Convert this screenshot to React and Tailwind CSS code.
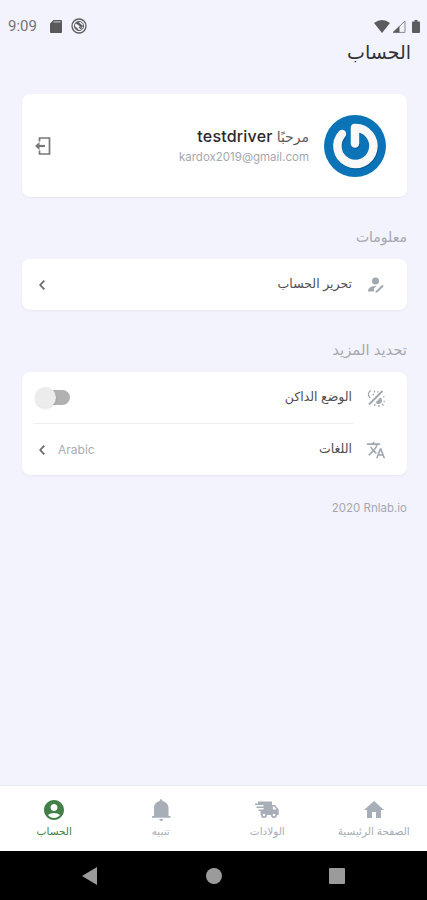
import React, { useState } from "react";
import { MdAccountCircle, MdHome, MdTranslate } from "react-icons/md";

function StatusBar() {
  return (
    <div dir="ltr" className="flex h-10 items-start justify-between pt-[16px] pr-[7px] pl-2 text-[#5c5c5e]">
      <div className="flex h-5 items-center">
        <span className="w-10 font-[Roboto] text-[15px] text-[#747478]">9:09</span>
        <svg viewBox="0 0 12 13" className="ml-[2px] h-[13px] w-3">
          <path d="M3.500 0H11a1 1 0 0 1 1 1v11a1 1 0 0 1-1 1H1a1 1 0 0 1-1-1V3.500z" fill="#59595b" />
          <path d="M3.500 1.900h7" stroke="#bfbfc4" strokeWidth="1.200" />
        </svg>
        <svg viewBox="0 0 16 16" className="ml-[9px] size-4" fill="none" stroke="currentColor">
          <circle cx="8" cy="8" r="7" strokeWidth="1.300" />
          <circle cx="8" cy="8" r="4.600" strokeWidth="1" />
          <path d="M4 5l3-1.500L12 8l-1.500 2L8 7.500z" fill="currentColor" stroke="none" />
          <path d="M4 9l3 3M8 9l2.500 2" strokeWidth="1.300" />
        </svg>
      </div>
      <div className="flex h-5 items-center">
        <svg viewBox="0 0 16 13" className="h-[13px] w-4" fill="currentColor">
          <path d="M0 3Q8-3 16 3L8 13z" />
        </svg>
        <svg viewBox="0 0 14 13" className="ml-[2px] h-[13px] w-[14px]">
          <path d="M1 12.400L13 1v11.400z" fill="none" stroke="#8a8a8d" />
          <path d="M1 12.500L7.500 6v6.500z" fill="currentColor" />
        </svg>
        <svg viewBox="0 0 8 13" className="ml-[6px] h-[13px] w-2" fill="currentColor">
          <path d="M2.500 0h3v1.500H7a1 1 0 0 1 1 1V12a1 1 0 0 1-1 1H1a1 1 0 0 1-1-1V2.500a1 1 0 0 1 1-1h1.500z" />
        </svg>
      </div>
    </div>
  );
}

function Avatar() {
  return (
    <svg viewBox="0 0 62 62" className="size-[62px] shrink-0">
      <circle cx="31" cy="31" r="31" fill="#0b74b8" />
      <g fill="none" strokeLinecap="round" strokeLinejoin="round" strokeWidth="8.500">
        <path d="M18 19A18 18 0 1 0 31 13v15.500" stroke="#075d96" transform="translate(.7 1.200)" />
        <path d="M18 19A18 18 0 1 0 31 13v15.500" stroke="#f8f8f8" />
      </g>
    </svg>
  );
}

function LogoutIcon() {
  return (
    <svg viewBox="0 0 16 18" className="h-[18px] w-4" fill="none" stroke="#777">
      <path d="M4.500 4.500V1h10v16h-10v-3.500" strokeWidth="1.700" />
      <path d="M3 9h7" strokeWidth="2.200" />
      <path d="M0 9l4.500-4v8z" fill="#777" stroke="none" />
    </svg>
  );
}

function UserEditIcon() {
  return (
    <svg viewBox="0 0 16 16" className="h-4 w-4" fill="#a1a8b0">
      <circle cx="7.500" cy="4" r="3.500" />
      <path d="M0 14.500c0-3.700 3-5.500 8.500-5.500L6 11.500v3z" />
      <path d="M7.500 14.500l6.800-6.800 1.500 1.500-6.600 6.300H7.500z" />
    </svg>
  );
}

function ThemeIcon() {
  return (
    <svg viewBox="0 0 18 18" className="size-[18px]" fill="none" stroke="#a1a8b0" strokeWidth="1.300">
      <path d="M2 15.500L15.500 2" strokeWidth="1.900" />
      <path d="M4 1.500C1 3 .5 6.500 3 9" />
      <path d="M8.500 13.500l5-5a3.600 3.600 0 1 1-5 5z" fill="#a1a8b0" stroke="none" />
      <path d="M7.500 1.500v2M5.500 5.500h1.500M10 2.800h1.500M16 8l1.500-.5M16.500 12.500h1.300M15 15l1.500 1.500M12 16v2M8 15l-.5 2" />
    </svg>
  );
}

function BellIcon() {
  return (
    <svg viewBox="0 0 24 24" className="size-6" fill="currentColor">
      <path d="M10.700 2.500a1.300 1.300 0 0 1 2.600 0v.6c3.900.9 6.200 3.700 6.200 7V18h2v1.700H3V18h2v-7.900c0-3.300 2-6.100 5.700-7z" />
      <path d="M10.300 20.900h4a2 2 0 0 1-4 0z" />
    </svg>
  );
}

function TruckIcon() {
  return (
    <svg viewBox="0 0 24 24" className="size-6" fill="currentColor">
      <path d="M3 3.500h14V7h3l3.700 4.500V17H5.500v-4h-2v-1.500h5V10h-7V8.500h7V7H0V5.500h3z" />
      <path d="M17.800 8.500V11.500h3.700l-2.300-3z" fill="#fff" />
      <circle cx="9" cy="17" r="3" />
      <circle cx="19" cy="17" r="3" />
      <circle cx="9" cy="17" r="1.300" fill="#fff" />
      <circle cx="19" cy="17" r="1.300" fill="#fff" />
    </svg>
  );
}

function Chevron() {
  return (
    <svg viewBox="0 0 6 10" className="ml-5 h-[10px] w-[6px]" fill="none" stroke="#686868" strokeWidth="1.700">
      <path d="M5.300.7L1.200 5l4.100 4.300" />
    </svg>
  );
}

function Row({ icon, label, children }) {
  return (
    <div className="flex h-[51px] items-center pr-[21px]">
      <span className="flex w-5 justify-center">{icon}</span>
      <span className="mr-[14px] text-[12.500px] text-[#505052]">{label}</span>
      <div className="mr-auto flex items-center" dir="ltr">{children}</div>
    </div>
  );
}

const tabs = [
  { label: "الصفحة الرئيسية", icon: MdHome },
  { label: "الولادات", icon: TruckIcon },
  { label: "تنبيه", icon: BellIcon },
  { label: "الحساب", icon: MdAccountCircle, active: true },
];

export default function App() {
  const [dark, setDark] = useState(false);

  return (
    <div dir="rtl" className="flex h-[900px] w-[427px] flex-col overflow-hidden bg-[#f2f3fc] font-[Inter,'DejaVu_Sans',sans-serif]">
      <StatusBar />
      <h1 className="h-[54px] pr-4 text-[19px] leading-[25px] text-[#333336]">الحساب</h1>

      <main className="flex-1 pr-5 pl-[22px]">
        <section className="flex h-[103px] items-center rounded-lg bg-white pr-[21px] pl-[13px] shadow-xs">
          <Avatar />
          <div className="mr-[15px] h-[46px]">
            <p className="h-[26px] text-[14px] leading-[26px] text-[#5c5c60]">
              مرحبًا <span className="text-[16px] font-medium tracking-[0.2px] text-[#29292d]">testdriver</span>
            </p>
            <p className="text-[11.500px] leading-[17px] text-[#a5a8ad]">kardox2019@gmail.com</p>
          </div>
          <button className="mr-auto" aria-label="logout">
            <LogoutIcon />
          </button>
        </section>

        <h2 className="h-[62px] pt-[30px] text-[14px] leading-5 text-[#a5a8ae]">معلومات</h2>
        <section className="rounded-lg bg-white shadow-xs">
          <Row icon={<UserEditIcon />} label="تحرير الحساب">
            <span className="-ml-[3px]"><Chevron /></span>
          </Row>
        </section>

        <h2 className="h-[62px] pt-[30px] text-[14.800px] leading-5 text-[#a5a8ae]">تحديد المزيد</h2>
        <section className="rounded-lg bg-white shadow-xs">
          <Row icon={<ThemeIcon />} label="الوضع الداكن">
            <button
              role="switch"
              aria-checked={dark}
              aria-label="dark mode"
              onClick={() => setDark(!dark)}
              className="ml-[13px] flex h-5 w-[35px] items-center"
            >
              <span className="z-10 size-[21px] shrink-0 rounded-full bg-[#ececec] shadow" />
              <span className="-ml-3 h-[15px] w-[26px] rounded-full bg-[#b1b1b1]" />
            </button>
          </Row>
          <div className="mr-[54px] ml-[11px] h-px bg-[#eeeeef]" />
          <Row icon={<MdTranslate className="size-5 text-[#a1a8b0]" />} label="اللغات">
            <span className="-ml-[3px]"><Chevron /></span>
            <span className="ml-[13px] text-[12px] text-[#a6adb3]">Arabic</span>
          </Row>
        </section>

        <p className="pt-[25px] text-[11.500px] leading-4 text-[#a5a8ae]">
          <bdi dir="ltr">2020 Rnlab.io</bdi>
        </p>
      </main>

      <nav className="grid h-[66px] grid-cols-4 border-t border-[#ebecf3] bg-white pl-px">
        {tabs.map(({ label, icon: Icon, active }) => (
          <button
            key={label}
            className={`flex flex-col items-center pt-3 ${active ? "text-[#438047]" : "text-[#a7aeb8]"}`}
          >
            <Icon className="size-6" />
            <span className="text-[10.500px] leading-[19px] whitespace-nowrap">{label}</span>
          </button>
        ))}
      </nav>

      <div dir="ltr" className="flex h-[49px] items-center justify-between bg-black px-[82px]">
        <svg viewBox="0 0 15 18" className="h-[18px] w-[15px]" fill="#9b9b9b">
          <path d="M15 0v18L0 9z" />
        </svg>
        <span className="ml-px size-4 rounded-full bg-[#9b9b9b]" />
        <span className="size-4 rounded-[1px] bg-[#9b9b9b]" />
      </div>
    </div>
  );
}
